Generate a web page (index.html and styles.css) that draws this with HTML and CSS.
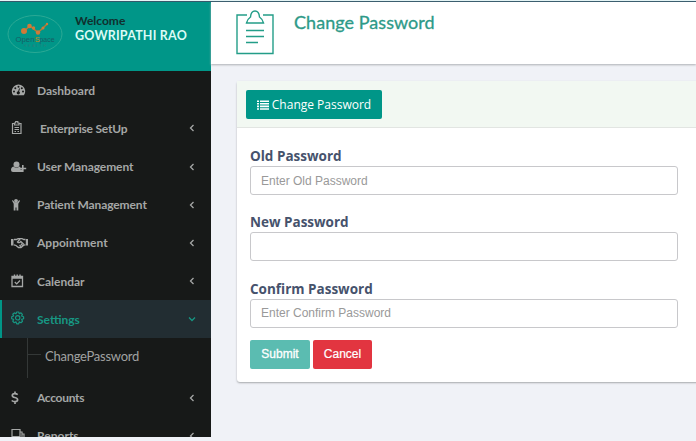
FILE: index.html
```html
<!DOCTYPE html>
<html lang="en">
<head>
<meta charset="utf-8">
<title>Change Password</title>
<link rel="stylesheet" href="styles.css">
</head>
<body>
<div class="app">
  <aside class="sidebar">
    <div class="profile">
      <svg class="logo" width="56" height="40" viewBox="0 0 56 40">
        <ellipse cx="28" cy="20" rx="27" ry="18.500" fill="none" stroke="#2aa995"/>
        <path d="M17 17L23 12L31 18.500L36 14L40 10" fill="none" stroke="#b47a35" stroke-width="1.500"/>
        <g fill="#cf7a38"><circle cx="17" cy="17" r="3"/><circle cx="22.500" cy="12" r="2.300"/><circle cx="26.500" cy="14" r="1.700"/><circle cx="31" cy="18.500" r="2.200"/><circle cx="36" cy="14" r="1.500"/><circle cx="40" cy="10" r="1.200"/></g>
        <text x="8.500" y="27.500" textLength="19" lengthAdjust="spacingAndGlyphs" class="logo-name">Open</text>
        <text x="27.800" y="27.500" class="logo-s">S</text>
        <text x="32.500" y="27.500" textLength="15" lengthAdjust="spacingAndGlyphs" class="logo-name">pace</text>
        <text x="17" y="32.500" textLength="22" class="logo-sub">HEALTH</text>
      </svg>
      <div class="who"><div class="welcome">Welcome</div><div class="name">GOWRIPATHI RAO</div></div>
    </div>
    <nav>
      <a class="item"><svg class="ic" width="16" height="16" viewBox="0 0 16 16"><path fill="currentColor" d="M2 13A6.700 6.700 0 1 1 13 13Q12.800 13.300 12.400 13.300H2.600Q2.200 13.300 2 13Z"/><g fill="#171918"><circle cx="3" cy="9.500" r="1"/><circle cx="4.300" cy="6.200" r="1"/><circle cx="7.500" cy="4.800" r="1"/><circle cx="10.800" cy="6.200" r="1"/><circle cx="12" cy="9.500" r="1"/><circle cx="7.300" cy="10.800" r="1.600"/></g><path d="M7.300 10.500L8.500 6.500" stroke="#171918"/></svg><span class="t dashboard">Dashboard</span></a>
      <a class="item"><svg class="ic" width="16" height="16" viewBox="0 0 16 16"><path fill="none" stroke="currentColor" stroke-width="1.200" d="M3.500 3.500H1.500V13.500H10V3.500H8M3.500 5V3H4.700V1.500H6.800V3H8V5ZM3.500 7.500H8M3.500 9.500H8M3.500 11.500H5M6.500 11.500H8"/></svg><span class="t enterprise">Enterprise SetUp</span><svg class="ar" width="6" height="8" viewBox="0 0 6 8"><path d="M4.500 1L1.500 4L4.500 7"/></svg></a>
      <a class="item"><svg class="ic" width="16" height="16" viewBox="0 0 16 16"><circle cx="5.500" cy="5.500" r="3" fill="currentColor"/><path fill="currentColor" d="M2.500 7.500Q5.500 10 8.500 7.500L9.300 8V10.500H11V13H2Q0 13 0 11Q0 8 2.500 7.500Z"/><path d="M11.800 6V13M8.500 9.500H15.200" stroke="currentColor" stroke-width="1.600"/></svg><span class="t user">User Management</span><svg class="ar" width="6" height="8" viewBox="0 0 6 8"><path d="M4.500 1L1.500 4L4.500 7"/></svg></a>
      <a class="item"><svg class="ic" width="16" height="16" viewBox="0 0 16 16"><circle cx="5" cy="3.800" r="1.900" fill="currentColor"/><path fill="currentColor" d="M.9 3.600Q1.500 2.900 2.200 3.600L3.600 5.300H6.400L7.800 3.600Q8.500 2.900 9.100 3.800L7.300 6.800V13.500H5.500V10.500H4.500V13.500H2.700V6.800Z"/></svg><span class="t patient">Patient Management</span><svg class="ar" width="6" height="8" viewBox="0 0 6 8"><path d="M4.500 1L1.500 4L4.500 7"/></svg></a>
      <a class="item"><svg class="ic" width="18" height="16" viewBox="0 0 18 16"><path fill="none" stroke="currentColor" stroke-width="1.300" d="M3 4.500H5.500L7 3.700H11L12.800 4.500H14.500M3 9.800L5 10.500L7.500 12.500H10L13 10L14.500 9.800M9 4L6.500 7Q8 8.500 9.800 6.500L13 9.500M8.500 10L10 11.500M10 8.800L11.500 10.500"/><path fill="currentColor" d="M0 4H2.500V10.500H0ZM14.800 4H17V10.500H14.800Z"/></svg><span class="t appointment">Appointment</span><svg class="ar" width="6" height="8" viewBox="0 0 6 8"><path d="M4.500 1L1.500 4L4.500 7"/></svg></a>
      <a class="item"><svg class="ic" width="16" height="16" viewBox="0 0 16 16"><path fill="none" stroke="currentColor" stroke-width="1.300" d="M1 3.500H11.500V13.500H1ZM1 5H11.500M3.800 9L5.700 10.900L9 7.500"/><path d="M3.500 1.500V5M6.200 1.500V5M9 1.500V5" stroke="currentColor" stroke-width="1.400"/></svg><span class="t calendar">Calendar</span><svg class="ar" width="6" height="8" viewBox="0 0 6 8"><path d="M4.500 1L1.500 4L4.500 7"/></svg></a>
      <a class="item active"><svg class="ic" width="16" height="16" viewBox="0 0 16 16"><path fill="none" stroke="currentColor" stroke-width="1.200" stroke-linejoin="round" d="M5.700 1H7.700L8.200 2.700L10 1.900L11.400 3.300L10.600 5L12.600 5.700V7.800L10.700 8.400L11.500 10.300L10 11.700L8.200 10.900L7.700 12.800H5.700L5 10.900L3.300 11.700L1.800 10.300L2.600 8.400L.7 7.800V5.700L2.600 5L1.800 3.300L3.300 1.900L5 2.700Z"/><circle cx="6.700" cy="6.800" r="2.200" fill="none" stroke="currentColor" stroke-width="1.200"/></svg><span class="t settings">Settings</span><svg class="ar down" width="8" height="6" viewBox="0 0 8 6"><path d="M1 1.500L4 4.500L7 1.500"/></svg></a>
      <div class="sub"><a class="t">ChangePassword</a></div>
      <a class="item"><svg class="ic" width="16" height="16" viewBox="0 0 16 16"><path fill="none" stroke="currentColor" stroke-width="1.700" d="M6.700 4.700Q5.500 3.700 3.700 3.700Q1.300 3.700 1.300 5.500Q1.300 7 3.800 7.500Q6.600 8.100 6.600 9.800Q6.600 11.700 4 11.700Q2 11.700 .7 10.500M4 1.500V4M4 11.500V14"/></svg><span class="t accounts">Accounts</span><svg class="ar" width="6" height="8" viewBox="0 0 6 8"><path d="M4.500 1L1.500 4L4.500 7"/></svg></a>
      <a class="item"><svg class="ic" width="16" height="16" viewBox="0 0 16 16"><path fill="none" stroke="currentColor" stroke-width="1.200" d="M1 1.500H9V8.500H1ZM3 11H5.500V9M9 4H11V11H8V9M11 6H13V12"/></svg><span class="t reports">Reports</span><svg class="ar" width="6" height="8" viewBox="0 0 6 8"><path d="M4.500 1L1.500 4L4.500 7"/></svg></a>
    </nav>
  </aside>
  <main>
    <header class="head">
      <svg class="clip" width="38" height="45" viewBox="0 0 38 45" fill="none" stroke="#239d88" stroke-width="1.400"><path d="M11 5H1V43.500H37V5H27M10.500 13H27.500Q26.500 9 23.500 7Q23 1 19 1Q15 1 14.500 7Q11.500 9 10.500 13ZM10 20.500H28M10 26.500H28M10 32.500H22"/></svg>
      <h1>Change Password</h1>
    </header>
    <section class="card">
      <div class="card-head"><button class="tab"><svg width="12" height="10" viewBox="0 0 12 10"><path d="M0 1.200H2M3 1.200H12M0 3.800H2M3 3.800H12M0 6.400H2M3 6.400H12M0 9H2M3 9H12" stroke="#fff" stroke-width="1.600"/></svg><span>Change Password</span></button></div>
      <form>
        <label>Old Password</label><input placeholder="Enter Old Password">
        <label>New Password</label><input>
        <label>Confirm Password</label><input placeholder="Enter Confirm Password">
        <div class="actions"><button type="button" class="submit">Submit</button><button type="button" class="cancel">Cancel</button></div>
      </form>
    </section>
  </main>
</div>
</body>
</html>
```
FILE: styles.css
```css
* { box-sizing: border-box; }
body { margin: 0; width: 696px; height: 441px; overflow: hidden; background: #f0f2f7; border-top: 1px solid #e4f4f5; font-family: "Open Sans", sans-serif; }
.app { display: flex; height: 440px; border-top: 1px solid #34586a; }
.sidebar { width: 211px; height: 435px; overflow: hidden; background: #171918; flex: none; }
.profile { height: 68.6px; background: #009688; display: flex; padding: 11px 0 0 7px; }
.logo { margin-top: 1px; }
.logo-name { font: 7.5px "Liberation Sans", sans-serif; fill: #175e65; }
.logo-s { font: bold 8px "Liberation Sans", sans-serif; fill: #8f8f3c; }
.logo-sub { font: 3.5px "Liberation Sans", sans-serif; fill: #2b7f7b; }
.who { margin-left: 12px; font-family: Lato, sans-serif; font-weight: 700; white-space: nowrap; }
.welcome { font-size: 12px; line-height: 14px; color: #10302e; margin-top: 1px; }
.name { font-size: 12.5px; line-height: 15px; letter-spacing: .2px; color: #dcfbf5; }
nav { padding-top: .5px; }
.item { display: flex; align-items: center; height: 38.2px; padding: 0 16px 0 11px; color: #a5a7a6; }
.ic { flex: none; }
.t { font: 700 12px Lato, sans-serif; white-space: nowrap; }
.item .t { flex: 1; margin-left: 10px; }
.item .ic[width="18"] + .t { margin-left: 8px; }
.item .enterprise { margin-left: 13px; letter-spacing: -.2px; }
.user, .patient { letter-spacing: -.1px; }
.accounts { letter-spacing: -.3px; }
.ar { fill: none; stroke: currentColor; stroke-width: 1.3; }
.active { background: #222d32; color: #179783; border-left: 2px solid #009688; padding: 0 15px 0 9px; }
.sub { height: 40px; margin-left: 27px; display: flex; align-items: center; background: linear-gradient(#343837, #343837) 0 0 / 1px 100% no-repeat, linear-gradient(#343837, #343837) 0 16px / 14px 1px no-repeat; }
.sub .t { font-weight: 400; font-size: 13px; letter-spacing: -.25px; color: #a0a2a1; margin: -5px 0 0 18px; }
main { flex: 1; min-width: 0; }
.head { height: 62px; background: #fff; box-shadow: 0 1px 2px #aeb0b5; display: flex; padding: 8px 0 0 25px; }
h1 { margin: 0 0 0 20px; font: 400 18px/24px Lato, sans-serif; letter-spacing: .05px; -webkit-text-stroke: .3px #2d9a88; color: #2d9a88; white-space: nowrap; }
.card { margin: 17px -5px 0 26px; height: 301px; background: #fff; border-radius: 3px; box-shadow: 0 1px 2px #a6a8ac; }
.card-head { height: 47px; background: #f2f8f2; border-bottom: 1px solid #e2e5e2; padding: 9px; }
button { border: 0; border-radius: 2px; color: #fff; padding: 0; }
.tab { width: 136px; height: 29px; background: #009688; font: 12px "Open Sans", sans-serif; display: flex; align-items: center; justify-content: center; gap: 3px; white-space: nowrap; }
form { padding: 18px 23px 0 13px; display: flex; flex-direction: column; }
label { font: 700 13.5px/20px "Open Sans", sans-serif; color: #46526c; white-space: nowrap; }
input { width: 428px; height: 29px; border: 1px solid #c8c8cb; border-radius: 3px; padding: 0 10px; font: 12px "Liberation Sans", sans-serif; margin: 0 0 17.3px; outline: 0; }
input::placeholder { color: #999; }
.actions { display: flex; gap: 3px; margin-top: -5px; }
.actions button { height: 29px; font: 12px "Liberation Sans", sans-serif; }
.submit { width: 60px; background: #5bbcb1; -webkit-text-stroke: .3px #fff; }
.cancel { width: 59px; background: #e23540; -webkit-text-stroke: .2px #fff; }
```
